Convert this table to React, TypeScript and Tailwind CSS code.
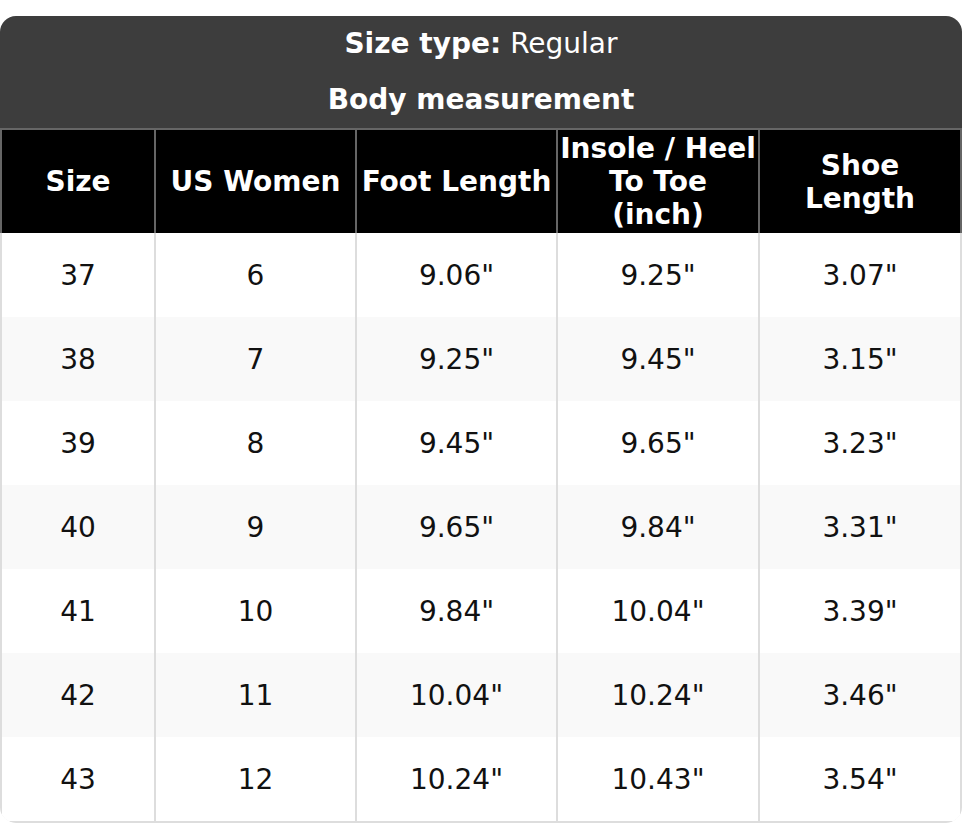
const rows = [
  ["37", "6", '9.06"', '9.25"', '3.07"'],
  ["38", "7", '9.25"', '9.45"', '3.15"'],
  ["39", "8", '9.45"', '9.65"', '3.23"'],
  ["40", "9", '9.65"', '9.84"', '3.31"'],
  ["41", "10", '9.84"', '10.04"', '3.39"'],
  ["42", "11", '10.04"', '10.24"', '3.46"'],
  ["43", "12", '10.24"', '10.43"', '3.54"'],
];

const headers: string[][] = [
  ["Size"],
  ["US Women"],
  ["Foot Length"],
  ["Insole / Heel", "To Toe", "(inch)"],
  ["Shoe", "Length"],
];

const cols = "grid grid-cols-[154px_201px_201px_202px_204px]";

export default function App() {
  return (
    <div className="min-h-screen bg-white pt-[16px] font-['DejaVu_Sans',sans-serif]">
      <div className="w-[962px] overflow-hidden rounded-[16px]">
        <div className="bg-[#3d3d3d] text-[28px] leading-[33px] text-white">
          <div className="flex h-[56px] items-center justify-center pb-[2px]">
            <span className="font-bold">Size type:</span>
            <span className="ml-[9px]">Regular</span>
          </div>
          <div className="flex h-[56px] items-center justify-center pb-[2px] font-bold">Body measurement</div>
        </div>

        <div className={`${cols} border-t-2 border-[#666] bg-black`}>
          {headers.map((lines, i) => (
            <div
              key={i}
              className={`flex h-[103px] flex-col items-center justify-center whitespace-nowrap border-l-2 border-[#666] text-center text-[28px] font-bold leading-[33px] text-white ${
                i === headers.length - 1 ? "border-r-2" : ""
              }`}
            >
              {lines.map((l) => (
                <span key={l}>{l}</span>
              ))}
            </div>
          ))}
        </div>

        <div className="rounded-b-[16px] border-b-2 border-[#ddd]">
          {rows.map((r, ri) => (
            <div key={r[0]} className={`${cols} ${ri % 2 === 1 ? "bg-[#f9f9f9]" : "bg-white"}`}>
              {r.map((v, ci) => (
                <div
                  key={ci}
                  className={`flex h-[84px] items-center justify-center border-l-2 border-[#ddd] text-[28px] leading-[33px] text-[#111] ${
                    ci === r.length - 1 ? "border-r-2" : ""
                  }`}
                >
                  {v}
                </div>
              ))}
            </div>
          ))}
        </div>
      </div>
    </div>
  );
}
